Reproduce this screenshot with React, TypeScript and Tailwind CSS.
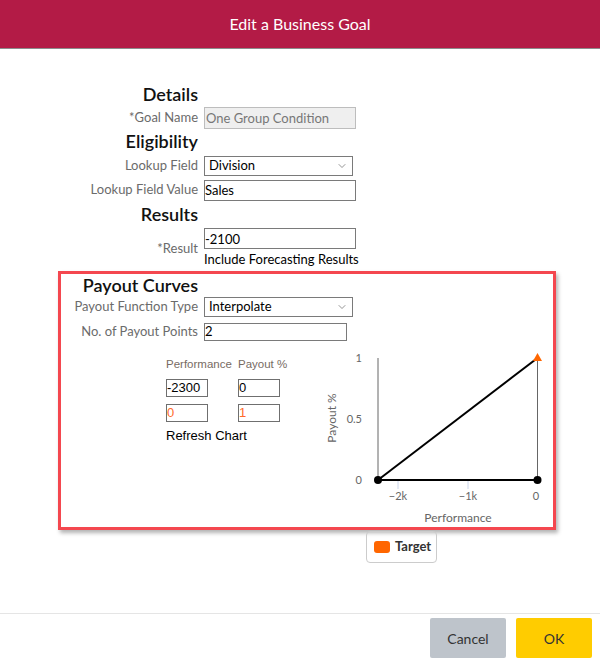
import { ChevronDown } from "lucide-react";

const LABEL_FONT = { fontFamily: "Lato, 'Noto Sans', sans-serif" };

function Heading({ text, w }: { text: string; w: number }) {
  return (
    <div
      className="h-[20px] leading-[20px] text-right text-[18px] font-semibold text-[#111]"
      style={{ width: w }}
    >
      {text}
    </div>
  );
}

function Row({
  label,
  w,
  h = 24,
  children,
}: {
  label: string;
  w: number;
  h?: number;
  children: React.ReactNode;
}) {
  return (
    <div className="flex items-center gap-[6px]" style={{ height: h }}>
      <div className="text-right text-[13px] text-[#6b6b6b] shrink-0" style={{ width: w }}>
        {label}
      </div>
      <div>{children}</div>
    </div>
  );
}

function Select({ value, w }: { value: string; w: string }) {
  return (
    <div
      className={`${w} h-[20px] border border-[#7a7a7a] bg-white flex items-center justify-between pl-[4px] pr-[4px] text-[13px] text-black`}
    >
      <span>{value}</span>
      <ChevronDown size={12} strokeWidth={1.25} className="text-[#555]" />
    </div>
  );
}

function TextBox({ value, w, h = "h-[21px]" }: { value: string; w: string; h?: string }) {
  return (
    <input
      readOnly
      value={value}
      className={`${w} ${h} border border-[#7a7a7a] bg-white px-0 text-[13px] text-black outline-none block`}
    />
  );
}

function SmallBox({ value, orange }: { value: string; orange?: boolean }) {
  return (
    <input
      readOnly
      value={value}
      className={`w-[42px] h-[18px] border border-[#6f6f6f] bg-white px-0 text-[13px] outline-none block ${
        orange ? "text-[#ff6a2b]" : "text-black"
      }`}
      style={{ fontFamily: "'Liberation Sans', Arial, sans-serif" }}
    />
  );
}

function Chart() {
  const axis = { fontFamily: "Lato, 'Noto Sans', sans-serif", fontSize: 12, fill: "#666" };
  return (
    <svg width={228} height={182} viewBox="0 0 228 182">
      <line x1={53} y1={14} x2={53} y2={136} stroke="#666" strokeWidth={1} />
      <line x1={212.5} y1={14} x2={212.5} y2={136} stroke="#666" strokeWidth={1} />
      {[73, 143].map((x) => (
        <line key={x} x1={x} y1={137} x2={x} y2={145} stroke="#ccd6eb" strokeWidth={1} />
      ))}
      <line x1={53} y1={136} x2={212.5} y2={14} stroke="#000" strokeWidth={2} />
      <line x1={53} y1={136} x2={212.5} y2={136} stroke="#000" strokeWidth={2} />
      <circle cx={53} cy={136} r={4} fill="#000" />
      <circle cx={212.5} cy={136} r={4} fill="#000" />
      <polygon points="212.5,9 217,17 208,17" fill="#ff6600" />
      <text x={37} y={18} textAnchor="end" {...axis} fontSize={11}>1</text>
      <text x={37} y={79} textAnchor="end" {...axis} fontSize={11}>0.5</text>
      <text x={37} y={140} textAnchor="end" {...axis} fontSize={11}>0</text>
      <text x={73} y={156} textAnchor="middle" {...axis} fontSize={11}>−2k</text>
      <text x={143} y={156} textAnchor="middle" {...axis} fontSize={11}>−1k</text>
      <text x={211} y={156} textAnchor="middle" {...axis} fontSize={11}>0</text>
      <text x={133} y={178} textAnchor="middle" {...axis}>Performance</text>
      <text
        x={0}
        y={0}
        textAnchor="middle"
        transform="translate(11 74) rotate(-90)"
        {...axis}
      >
        Payout %
      </text>
    </svg>
  );
}

export default function App() {
  return (
    <div className="w-[600px] h-[661px] bg-white flex flex-col" style={LABEL_FONT}>
      <div className="h-[49px] shrink-0 bg-[#b31b46] border-b border-[#8c8c8c] flex items-center justify-center">
        <span className="text-white text-[16px]">Edit a Business Goal</span>
      </div>

      <div className="pt-[35px]">
        <Heading text="Details" w={198} />
        <div className="mt-[2px]">
          <Row label="*Goal Name" w={198}>
            <input
              readOnly
              value="One Group Condition"
              className="w-[152px] h-[22px] border border-[#bdbdbd] bg-[#efefef] px-[1px] text-[13px] text-[#777] outline-none block"
            />
          </Row>
        </div>
        <div className="mt-[1px]">
          <Heading text="Eligibility" w={198} />
        </div>
        <div className="mt-[3px]">
          <Row label="Lookup Field" w={198}>
            <Select value="Division" w="w-[149px]" />
          </Row>
          <Row label="Lookup Field Value" w={198}>
            <TextBox value="Sales" w="w-[152px]" />
          </Row>
        </div>
        <div className="mt-[2px]">
          <Heading text="Results" w={198} />
        </div>
        <div className="mt-[2px] flex items-center gap-[6px] h-[44px]">
          <div className="w-[198px] text-right text-[13px] text-[#6b6b6b] pt-[2px]">*Result</div>
          <div className="pt-[1px]">
            <TextBox value="-2100" w="w-[152px]" />
            <div className="text-[13px] text-black leading-[20px]">Include Forecasting Results</div>
          </div>
        </div>

        <div className="mt-[1px] ml-[58px] w-[498px] h-[259px] border-[3px] border-[#f4474f] shadow-[2px_3px_4px_rgba(0,0,0,0.3)]">
          <div className="pt-[1px]">
            <Heading text="Payout Curves" w={137} />
          </div>
          <Row label="Payout Function Type" w={137}>
            <Select value="Interpolate" w="w-[149px]" />
          </Row>
          <div className="mt-[1px]">
            <Row label="No. of Payout Points" w={137}>
              <TextBox value="2" w="w-[143px]" h="h-[18px]" />
            </Row>
          </div>
          <div className="flex">
            <div
              className="w-[264px] pl-[105px] pt-[12px] text-[11.5px]"
              style={{ fontFamily: "'Liberation Sans', Arial, sans-serif" }}
            >
              <div className="grid grid-cols-[72px_auto] text-[#776b63] leading-[16px]">
                <span>Performance</span>
                <span>Payout %</span>
              </div>
              <div className="grid grid-cols-[72px_auto] mt-[7px]">
                <SmallBox value="-2300" />
                <SmallBox value="0" />
              </div>
              <div className="grid grid-cols-[72px_auto] mt-[7px]">
                <SmallBox value="0" orange />
                <SmallBox value="1" orange />
              </div>
              <div className="mt-[6px] text-[13px] leading-[16px] text-black">Refresh Chart</div>
            </div>
            <Chart />
          </div>
        </div>

        <div className="ml-[366px] mt-[1px] w-[71px] h-[32px] border border-[#cccccc] rounded-[4px] flex items-center pl-[7px] gap-[5px]">
          <span className="w-[16px] h-[12px] rounded-[3px] bg-[#ff6600]" />
          <span className="text-[13px] font-bold text-[#333]">Target</span>
        </div>
      </div>

      <div className="mt-auto h-[48px] border-t border-[#e5e5e5] flex justify-end items-start gap-[10px] pr-[8px] pt-[4px]">
        <button className="w-[76px] h-[40px] rounded-[2px] bg-[#bec4cb] text-[14px] text-[#333]">Cancel</button>
        <button className="w-[76px] h-[40px] rounded-[2px] bg-[#ffcc00] text-[14px] text-[#333]">OK</button>
      </div>
    </div>
  );
}
